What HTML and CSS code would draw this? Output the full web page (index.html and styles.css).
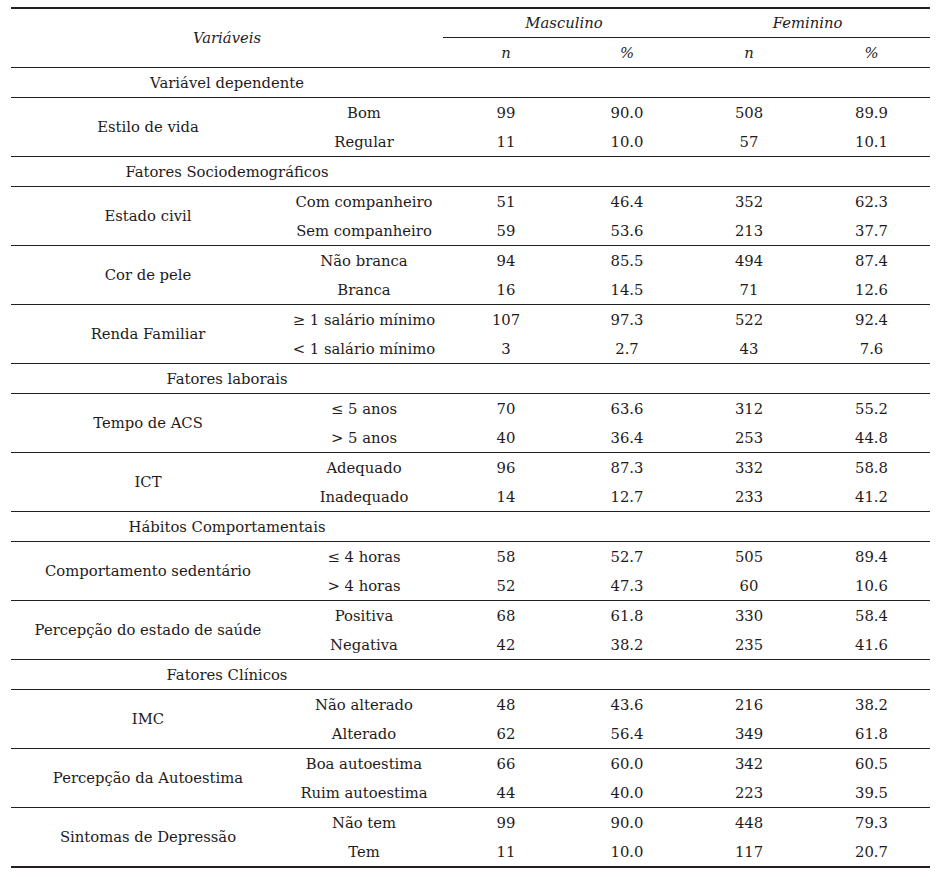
FILE: index.html
```html
<!DOCTYPE html>
<html lang="pt">
<head>
<meta charset="utf-8">
<title>Tabela</title>
<link rel="stylesheet" href="styles.css">
</head>
<body>
<table class="data">
  <colgroup>
    <col class="c1"><col class="c2"><col class="c3"><col class="c4"><col class="c5"><col class="c6">
  </colgroup>
  <thead>
    <tr class="h1">
      <th colspan="2" rowspan="2" class="var">Variáveis</th>
      <th colspan="2" class="grp">Masculino</th>
      <th colspan="2" class="grp">Feminino</th>
    </tr>
    <tr class="h2">
      <th>n</th><th>%</th><th>n</th><th>%</th>
    </tr>
  </thead>
  <tbody>
    <tr class="sec"><td colspan="2">Variável dependente</td><td colspan="4"></td></tr>
    <tr><td rowspan="2">Estilo de vida</td><td>Bom</td><td>99</td><td>90.0</td><td>508</td><td>89.9</td></tr>
    <tr class="end"><td>Regular</td><td>11</td><td>10.0</td><td>57</td><td>10.1</td></tr>

    <tr class="sec"><td colspan="2">Fatores Sociodemográficos</td><td colspan="4"></td></tr>
    <tr><td rowspan="2">Estado civil</td><td>Com companheiro</td><td>51</td><td>46.4</td><td>352</td><td>62.3</td></tr>
    <tr class="end"><td>Sem companheiro</td><td>59</td><td>53.6</td><td>213</td><td>37.7</td></tr>
    <tr><td rowspan="2">Cor de pele</td><td>Não branca</td><td>94</td><td>85.5</td><td>494</td><td>87.4</td></tr>
    <tr class="end"><td>Branca</td><td>16</td><td>14.5</td><td>71</td><td>12.6</td></tr>
    <tr><td rowspan="2">Renda Familiar</td><td>≥ 1 salário mínimo</td><td>107</td><td>97.3</td><td>522</td><td>92.4</td></tr>
    <tr class="end"><td>&lt; 1 salário mínimo</td><td>3</td><td>2.7</td><td>43</td><td>7.6</td></tr>

    <tr class="sec"><td colspan="2">Fatores laborais</td><td colspan="4"></td></tr>
    <tr><td rowspan="2">Tempo de ACS</td><td>≤ 5 anos</td><td>70</td><td>63.6</td><td>312</td><td>55.2</td></tr>
    <tr class="end"><td>&gt; 5 anos</td><td>40</td><td>36.4</td><td>253</td><td>44.8</td></tr>
    <tr><td rowspan="2">ICT</td><td>Adequado</td><td>96</td><td>87.3</td><td>332</td><td>58.8</td></tr>
    <tr class="end"><td>Inadequado</td><td>14</td><td>12.7</td><td>233</td><td>41.2</td></tr>

    <tr class="sec"><td colspan="2">Hábitos Comportamentais</td><td colspan="4"></td></tr>
    <tr><td rowspan="2">Comportamento sedentário</td><td>≤ 4 horas</td><td>58</td><td>52.7</td><td>505</td><td>89.4</td></tr>
    <tr class="end"><td>&gt; 4 horas</td><td>52</td><td>47.3</td><td>60</td><td>10.6</td></tr>
    <tr><td rowspan="2">Percepção do estado de saúde</td><td>Positiva</td><td>68</td><td>61.8</td><td>330</td><td>58.4</td></tr>
    <tr class="end"><td>Negativa</td><td>42</td><td>38.2</td><td>235</td><td>41.6</td></tr>

    <tr class="sec"><td colspan="2">Fatores Clínicos</td><td colspan="4"></td></tr>
    <tr><td rowspan="2">IMC</td><td>Não alterado</td><td>48</td><td>43.6</td><td>216</td><td>38.2</td></tr>
    <tr class="end"><td>Alterado</td><td>62</td><td>56.4</td><td>349</td><td>61.8</td></tr>
    <tr><td rowspan="2">Percepção da Autoestima</td><td>Boa autoestima</td><td>66</td><td>60.0</td><td>342</td><td>60.5</td></tr>
    <tr class="end"><td>Ruim autoestima</td><td>44</td><td>40.0</td><td>223</td><td>39.5</td></tr>
    <tr><td rowspan="2">Sintomas de Depressão</td><td>Não tem</td><td>99</td><td>90.0</td><td>448</td><td>79.3</td></tr>
    <tr class="end last"><td>Tem</td><td>11</td><td>10.0</td><td>117</td><td>20.7</td></tr>
  </tbody>
</table>
</body>
</html>
```
FILE: styles.css
```css
html, body {
  margin: 0;
  padding: 0;
  background: #ffffff;
}
body {
  padding: 7px 0 0 11px;
  font-family: "DejaVu Serif", "Liberation Serif", serif;
  color: #1f1b1c;
}
.data {
  border-collapse: collapse;
  width: 919px;
  table-layout: fixed;
  font-size: 14.8px;
  border-top: 2px solid #231f20;
  border-bottom: 2px solid #231f20;
}
.c1 { width: 274px; }
.c2 { width: 158px; }
.c3 { width: 126px; }
.c4 { width: 116px; }
.c5 { width: 128px; }
.c6 { width: 117px; }
.data th, .data td {
  padding: 0;
  height: 29px;
  text-align: center;
  vertical-align: middle;
  font-weight: normal;
  line-height: 20px;
}
.data tr.h1 th {
  height: 28px;
}
.data th {
  font-style: italic;
}
.data th.grp {
  border-bottom: 1px solid #231f20;
}
.data tr.h2 th {
  border-bottom: 1px solid #231f20;
}
.data th.var {
  border-bottom: 1px solid #231f20;
}
.data tr.sec td {
  border-bottom: 1px solid #231f20;
}
.data tr.end td {
  border-bottom: 1px solid #231f20;
}
.data tbody tr td[rowspan] {
  border-bottom: 1px solid #231f20;
}
.data tr.last td,
.data tbody tr:nth-last-child(2) td[rowspan] {
  border-bottom: none;
}
```
